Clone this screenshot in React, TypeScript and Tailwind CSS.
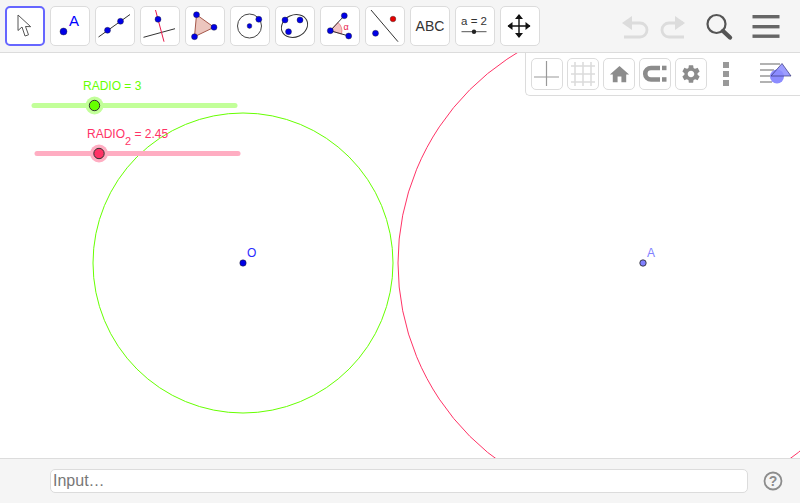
import { MdHome, MdSettings } from "react-icons/md";
import type { ReactNode } from "react";

const BLUE = "#0000e6";

function Dot({ x, y, r = 3, fill = BLUE }: { x: number; y: number; r?: number; fill?: string }) {
  return <circle cx={x} cy={y} r={r} fill={fill} stroke="#222" strokeWidth="0.4" />;
}

function ToolButton({ active, children }: { active?: boolean; children: ReactNode }) {
  return (
    <div
      className={
        active
          ? "h-10 w-10 shrink-0 rounded-[5px] border-2 border-[#6666ff] bg-white"
          : "h-10 w-10 shrink-0 rounded-[5px] border border-[#dcdcdc] bg-white"
      }
    >
      {children}
    </div>
  );
}

// coordinates are measured from the outer edge of the 40px button
function ToolIcon({ children }: { children: ReactNode }) {
  return (
    <svg viewBox="1 1 38 38" className="h-full w-full">
      {children}
    </svg>
  );
}

function StyleButton({ children }: { children: ReactNode }) {
  return (
    <div className="flex h-8 w-8 shrink-0 items-center justify-center rounded-[5px] border border-[#dcdcdc] bg-white">
      {children}
    </div>
  );
}

function StyleIcon({ children }: { children: ReactNode }) {
  return (
    <svg viewBox="1 1 30 30" className="h-full w-full">
      {children}
    </svg>
  );
}

function Toolbar() {
  return (
    <div className="flex items-center gap-[5px]">
      <ToolButton active>
        <svg viewBox="2 2 36 36" className="h-full w-full">
          <path d="M13 9 L13 24.5 L17 21 L20 30 L23.5 28.8 L20.5 20.5 L25.7 20.7 Z" fill="#fff" stroke="#555" strokeWidth="1" />
        </svg>
      </ToolButton>
      <ToolButton>
        <ToolIcon>
          <Dot x={13.5} y={25.5} r={3.5} />
          <text x={19} y={20} fontSize="15" fill="#0000ff" fontFamily="Liberation Sans, Arial, sans-serif">A</text>
        </ToolIcon>
      </ToolButton>
      <ToolButton>
        <ToolIcon>
          <line x1={3.5} y1={31} x2={35} y2={8.5} stroke="#333" />
          <Dot x={12.5} y={24.3} />
          <Dot x={25.5} y={15.3} />
        </ToolIcon>
      </ToolButton>
      <ToolButton>
        <ToolIcon>
          <line x1={3.5} y1={31.3} x2={35} y2={22.7} stroke="#333" />
          <line x1={15.5} y1={4} x2={24} y2={35.7} stroke="#e8194b" />
          <Dot x={18} y={13.3} />
        </ToolIcon>
      </ToolButton>
      <ToolButton>
        <ToolIcon>
          <polygon points="11.5,8.7 29,21.3 9.5,30.7" fill="#ecc6be" stroke="#a4574a" />
          <Dot x={11.5} y={8.7} />
          <Dot x={29} y={21.3} />
          <Dot x={9.5} y={30.7} />
        </ToolIcon>
      </ToolButton>
      <ToolButton>
        <ToolIcon>
          <circle cx={19.5} cy={20} r={12} fill="none" stroke="#444" />
          <Dot x={19.5} y={20} r={2.4} />
          <Dot x={28.8} y={13.3} />
        </ToolIcon>
      </ToolButton>
      <ToolButton>
        <ToolIcon>
          <ellipse cx={19.5} cy={20} rx={13.5} ry={11} fill="none" stroke="#333" transform="rotate(-25 19.5 20)" />
          <Dot x={10} y={14} />
          <Dot x={25} y={14} />
          <Dot x={13.5} y={25.7} />
        </ToolIcon>
      </ToolButton>
      <ToolButton>
        <ToolIcon>
          <path d="M10.3 24.7 L18 16.5 A11.5 11.5 0 0 1 21.5 28 Z" fill="#f3c4c4" stroke="#e05a6a" strokeWidth="0.6" />
          <line x1={10.3} y1={24.7} x2={24.3} y2={9.7} stroke="#333" />
          <line x1={10.3} y1={24.7} x2={28.7} y2={30} stroke="#333" />
          <Dot x={10.3} y={24.7} />
          <Dot x={24.3} y={9.7} />
          <Dot x={28.7} y={30} />
          <text x={23.5} y={23.5} fontSize="9" fill="#e8194b" fontFamily="Liberation Sans, Arial, sans-serif">α</text>
        </ToolIcon>
      </ToolButton>
      <ToolButton>
        <ToolIcon>
          <line x1={6} y1={4} x2={33} y2={35.7} stroke="#333" />
          <Dot x={28} y={13} r={2.8} fill="#e60000" />
          <Dot x={10.5} y={27.3} />
        </ToolIcon>
      </ToolButton>
      <ToolButton>
        <div className="flex h-full items-center justify-center font-['Liberation_Sans',Arial,sans-serif] text-[14px] text-[#333]">
          ABC
        </div>
      </ToolButton>
      <ToolButton>
        <ToolIcon>
          <text x={19} y={19} textAnchor="middle" fontSize="11.5" fill="#333" fontFamily="Liberation Sans, Arial, sans-serif">a = 2</text>
          <line x1={6.5} y1={25.7} x2={31.5} y2={25.7} stroke="#555" />
          <circle cx={19} cy={25.7} r={2.2} fill="#222" />
        </ToolIcon>
      </ToolButton>
      <ToolButton>
        <ToolIcon>
          <path d="M19 9 V31 M8 20 H30" stroke="#111" strokeWidth="1.4" />
          <path d="M19 8 L15 13 H23 Z M19 32 L15 27 H23 Z M7.5 20 L12.5 16 V24 Z M30.5 20 L25.5 16 V24 Z" fill="#111" />
        </ToolIcon>
      </ToolButton>
    </div>
  );
}

function HeaderActions() {
  return (
    <svg viewBox="0 0 180 52" className="h-[52px] w-[180px] shrink-0">
      {/* undo / redo, offset from x=620 */}
      <g fill="none" stroke="#dcdcdc" strokeWidth="2.8">
        <path d="M6 23 H20 A7 7 0 0 1 20 37 H4" />
        <path d="M63 23 H49 A7 7 0 0 0 49 37 H64" />
      </g>
      <path d="M2 23 L12 16 V30 Z M65 23 L55 16 V30 Z" fill="#dcdcdc" />
      <circle cx={96.5} cy={24} r={9} fill="none" stroke="#555" strokeWidth="2.2" />
      <line x1={103} y1={31} x2={110} y2={37.5} stroke="#555" strokeWidth="4.4" strokeLinecap="round" />
      <g fill="#666">
        <rect x={132.5} y={15} width={27} height={3.4} />
        <rect x={132.5} y={25} width={27} height={3.4} />
        <rect x={132.5} y={34.5} width={27} height={3.4} />
      </g>
    </svg>
  );
}

function StyleBar() {
  return (
    <div className="absolute right-0 top-0 flex h-[43px] w-[275px] items-start rounded-bl-[5px] border-b border-l border-[#dcdcdc] bg-white pl-[5px] pt-[5px]">
      <div className="flex gap-1">
        <StyleButton>
          <StyleIcon>
            <path d="M15.5 3 V28 M3 19 H28" stroke="#999" strokeWidth="1.2" />
          </StyleIcon>
        </StyleButton>
        <StyleButton>
          <StyleIcon>
            <path d="M8 4 V28 M16 4 V28 M24 4 V28 M4 8 H28 M4 16 H28 M4 24 H28" stroke="#dcdcdc" strokeWidth="1.6" />
          </StyleIcon>
        </StyleButton>
        <StyleButton>
          <MdHome size={23} color="#8c8c8c" />
        </StyleButton>
        <StyleButton>
          <StyleIcon>
            <path d="M21 10 H12 A5.75 5.75 0 0 0 12 21.5 H21" fill="none" stroke="#8c8c8c" strokeWidth="4.6" />
            <rect x="23" y="7.7" width="4.5" height="4.5" fill="#8c8c8c" />
            <rect x="23" y="19.2" width="4.5" height="4.5" fill="#8c8c8c" />
          </StyleIcon>
        </StyleButton>
        <StyleButton>
          <MdSettings size={22} color="#8c8c8c" />
        </StyleButton>
      </div>
      <div className="ml-[16px] mt-[4px] flex w-[6px] flex-col gap-[3px]">
        <div className="h-[6px] bg-[#999]" />
        <div className="h-[6px] bg-[#999]" />
        <div className="h-[6px] bg-[#999]" />
      </div>
      <svg viewBox="0 0 32 22" className="ml-[31px] mt-[5px] h-[22px] w-[32px]">
        <path d="M0 1 H20 M0 7 H14 M0 13 H10 M0 19 H12" stroke="#999" strokeWidth="1.6" />
        <circle cx={17} cy={13.5} r={7} fill="#8c8cff" />
        <polygon points="22,0.5 11,13 31,13" fill="#8c8cff" fillOpacity="0.85" stroke="#33337a" strokeWidth="0.7" />
      </svg>
    </div>
  );
}

function Canvas() {
  // canvas origin sits at y=53 of the page
  return (
    <div className="relative min-h-0 flex-1 overflow-hidden bg-white font-['Liberation_Sans',Arial,sans-serif]">
      <svg className="absolute inset-0 h-full w-full" viewBox="0 0 800 405">
        <circle cx={243} cy={210} r={150} fill="none" stroke="#66ff00" />
        <circle cx={643} cy={210} r={245} fill="none" stroke="#ff3366" />

        <line x1={34} y1={52.5} x2={235} y2={52.5} stroke="#c2ff99" strokeWidth="5" strokeLinecap="round" />
        <circle cx={94.5} cy={52.5} r={9} fill="#c2ff99" />
        <circle cx={94.5} cy={52.5} r={5.2} fill="#66ff00" stroke="#333" />

        <line x1={37} y1={100.5} x2={238} y2={100.5} stroke="#ffadc2" strokeWidth="5" strokeLinecap="round" />
        <circle cx={99} cy={100.5} r={9} fill="#ffadc2" />
        <circle cx={99} cy={100.5} r={5.2} fill="#ff3366" stroke="#333" />

        <circle cx={243} cy={210} r={3.2} fill="#0000e6" stroke="#222" strokeWidth="0.5" />
        <circle cx={643} cy={210} r={3.2} fill="#8080ff" stroke="#222" strokeWidth="0.8" />
      </svg>

      <span className="absolute left-[83px] top-[26px] text-[12px] leading-[14px] text-[#66ff00]">RADIO = 3</span>
      <span className="absolute left-[87px] top-[74px] whitespace-nowrap text-[12px] leading-[14px] text-[#ff3366]">
        RADIO<sub className="align-[-4px] text-[11px] leading-none">2</sub> = 2.45
      </span>
      <span className="absolute left-[247px] top-[193px] text-[12px] leading-[14px] text-[#2a2aff]">O</span>
      <span className="absolute left-[647px] top-[193px] text-[12px] leading-[14px] text-[#8080ff]">A</span>

      <StyleBar />
    </div>
  );
}

function Footer() {
  return (
    <div className="flex h-[45px] shrink-0 items-center border-t border-[#dcdcdc] bg-[#f5f5f5] pb-[1px] pl-[50px] font-['Liberation_Sans',Arial,sans-serif]">
      <div className="flex h-6 w-[698px] items-center rounded-[5px] border border-[#dcdcdc] bg-white pl-[2px] text-[16px] text-[#777]">
        Input…
      </div>
      <svg viewBox="0 0 20 20" className="ml-[15px] h-5 w-5">
        <circle cx={10} cy={10} r={8.5} fill="none" stroke="#8c8c8c" strokeWidth="1.8" />
        <text x={10} y={15} textAnchor="middle" fontSize="14" fontWeight="700" fill="#8c8c8c" fontFamily="Liberation Sans, Arial, sans-serif">?</text>
      </svg>
    </div>
  );
}

export default function App() {
  return (
    <div className="flex h-[503px] w-[800px] flex-col overflow-hidden bg-white">
      <header className="flex h-[53px] shrink-0 items-center justify-between border-b border-[#dcdcdc] bg-[#f5f5f5] pl-[5px]">
        <Toolbar />
        <HeaderActions />
      </header>
      <Canvas />
      <Footer />
    </div>
  );
}
